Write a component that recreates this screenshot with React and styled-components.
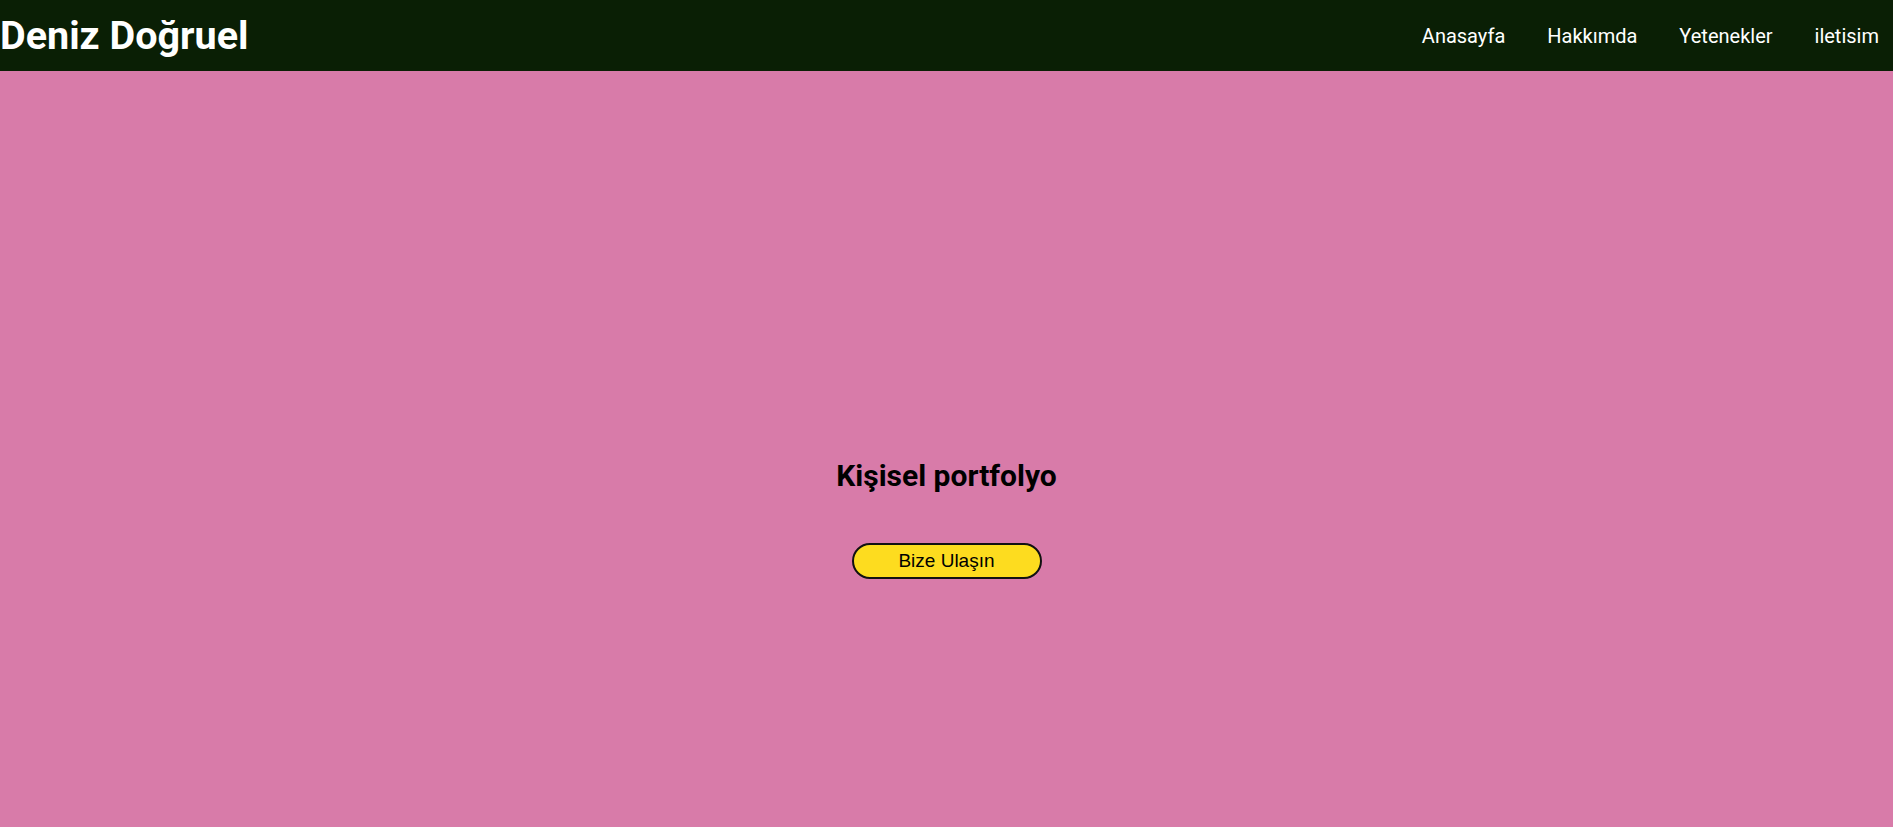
import styled, { createGlobalStyle } from 'styled-components';

const GlobalStyle = createGlobalStyle`
    * { box-sizing: border-box; }
    body {
        margin: 0;
        font-family: Roboto, "Liberation Sans", Arial, sans-serif;
        background: #d87ba9;
    }
`

const links = ['Anasayfa', 'Hakkımda', 'Yetenekler', 'iletisim'];

const App = () => {
    return (
        <>
            <GlobalStyle />
            <Header>
                <Logo>Deniz Doğruel</Logo>
                <Nav>
                    {links.map((l) => (
                        <NavLink key={l} href='#'>{l}</NavLink>
                    ))}
                </Nav>
            </Header>
            <Hero>
                <Title>Kişisel portfolyo</Title>
                <ContactButton>Bize Ulaşın</ContactButton>
            </Hero>
        </>
    );
}

const Header = styled.header`
    height: 71px;
    background: #0a1f05;
    display: flex;
    align-items: center;
    justify-content: space-between;
`

const Logo = styled.h1`
    margin: 0;
    color: #fff;
    font-size: 39.5px;
    font-weight: 700;
    line-height: 1;
`

const Nav = styled.nav`
    display: flex;
    align-items: center;
    gap: 42px;
    padding-right: 14px;
`

const NavLink = styled.a`
    color: #fff;
    text-decoration: none;
    font-size: 20px;
`

const Hero = styled.main`
    height: 756px;
    display: flex;
    flex-direction: column;
    align-items: center;
    padding-top: 387px;
`

const Title = styled.h2`
    margin: 0;
    font-size: 30px;
    font-weight: 700;
    color: #000;
`

const ContactButton = styled.button`
    margin-top: 50px;
    width: 190px;
    height: 36px;
    border: 2px solid #111;
    border-radius: 18px;
    background: #fddc1f;
    color: #000;
    font-family: "Liberation Sans", Arial, sans-serif;
    font-size: 19px;
    cursor: pointer;
`

export default App;
